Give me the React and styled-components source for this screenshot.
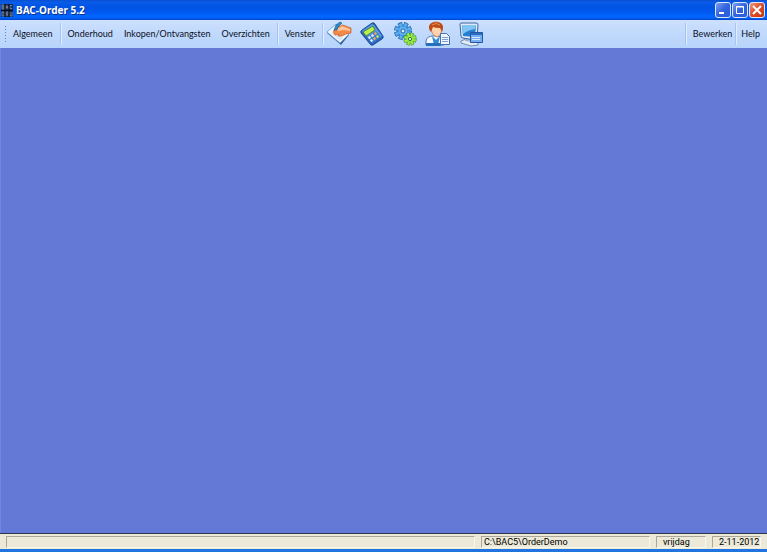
import React from 'react';
import styled, { createGlobalStyle } from 'styled-components';

const GlobalStyle = createGlobalStyle`
    * {
        box-sizing: border-box;
    }

    body {
        margin: 0;
    }
`

const Window = styled.div`
    display: flex;
    flex-direction: column;
    min-height: 100vh;
    border-bottom: 3px solid #1f74e0;
    font-family: Lato, sans-serif;
    background: #6479d6;
`

const TitleBar = styled.header`
    display: flex;
    align-items: center;
    height: 20px;
    padding: 0 2px 0 1px;
    background: linear-gradient(#0a50d0 0, #0a5be8 2px, #0054e4 7px, #0058ee 12px, #0066ff 16px, #0062f8 18px, #0042c8 20px);
`

const Title = styled.h1`
    flex: 1;
    margin: 0 0 0 3px;
    font-family: "Noto Sans", sans-serif;
    font-size: 10px;
    font-weight: 700;
    line-height: 20px;
    color: #fff;
    text-shadow: 1px 1px 0 #0a308c;
`

const WindowButtons = styled.div`
    display: flex;
    gap: 1px;
`

const WindowButton = styled.button`
    display: flex;
    width: 16px;
    height: 16px;
    padding: 0;
    border: 1px solid #dce6fb;
    border-radius: 3px;
    background: ${({ $close }) => $close
      ? 'linear-gradient(135deg, #ee9a7c, #dc4a24 50%, #c33a10)'
      : 'linear-gradient(135deg, #7d9ff2, #3263dc 50%, #2a5ce4)'};
`

const ToolBar = styled.nav`
    display: flex;
    align-items: center;
    height: 28px;
    padding: 0 7px 0 5px;
    background: linear-gradient(#cde0fe, #c0d9fc 50%, #b9d4fb);
`

const Grip = styled.span`
    width: 1px;
    height: 16px;
    margin-right: 7px;
    background: repeating-linear-gradient(#5c7fc4 0, #5c7fc4 1px, transparent 1px, transparent 3px);
`

const MenuButton = styled.button`
    padding: 0;
    margin-right: ${({ $gap }) => $gap || 0}px;
    border: 0;
    background: none;
    font-family: Lato, sans-serif;
    font-size: 9px;
    line-height: 20px;
    color: #0a0f1c;
    white-space: nowrap;
`

const Separator = styled.span`
    width: 2px;
    height: 22px;
    margin-right: ${({ $gap }) => $gap || 6}px;
    border-left: 1px solid #a9c3ef;
    border-right: 1px solid #e0ecff;
`

const Tools = styled.div`
    display: flex;
    flex: 1;
    gap: 7px;
`

const ToolButton = styled.button`
    display: flex;
    width: 26px;
    height: 26px;
    padding: 0;
    border: 0;
    background: none;
`

const Workspace = styled.main`
    flex: 1;
    border-left: 1px solid #7187db;
`

const StatusBar = styled.footer`
    display: flex;
    gap: 6px;
    height: 16px;
    padding: 2px 6px 1px;
    border-top: 1px solid #303448;
    background: #ece9d8;
`

const StatusPanel = styled.div`
    flex: ${({ $width }) => ($width ? `0 0 ${$width}px` : '1')};
    padding-left: ${({ $pad }) => $pad || 2}px;
    border: 1px solid;
    border-color: #aca899 #f8f7f0 #f8f7f0 #aca899;
    font-family: Roboto, sans-serif;
    font-size: 9px;
    line-height: 11px;
    color: #000;
    white-space: nowrap;
`

const LogoIcon = () => (
  <svg width="12" height="13" viewBox="0 0 12 13" aria-hidden="true">
    <rect width="12" height="13" fill="#16305e" />
    <path d="M1 1v4M1 1h2v2H1m0 2h2V3M5 5V2h2v3M5 3.500h2M11 1.500H9v3h2M1 8v4h2V8zM5 12V8h2v2H5m1 0 1 2M9 8v4h2V8" fill="none" stroke="#8a9099" strokeWidth=".8" />
    <path d="M0 6.500h12M4 0v13M8 0v13" stroke="#050a18" strokeWidth="1" />
  </svg>
)

const OrderIcon = () => (
  <svg width="26" height="26" viewBox="0 0 26 26" aria-hidden="true">
    <path d="m1 12 9-9 13 11-8 10z" fill="#34699f" />
    <path d="m1 11 9-8 13 10-9 9z" fill="#f3f8ff" stroke="#6d9ccb" strokeWidth=".8" />
    <path d="m5 12 3-3 9 8-3 3z" fill="#d9e7f8" />
    <path d="m8 10 4-4 5-2 5 2 3 1v5l-5 1-4 2h-4l1-2-4 1q-2-2-1-5z" fill="#f48a48" stroke="#cc5a20" strokeWidth=".7" />
    <path d="m11 8 5-3 5 2 3 1v2l-6-1-6 1z" fill="#ffc49b" />
    <path d="m8 9 2-5 4-3 2 1-4 4-1 3z" fill="#278bce" stroke="#155b98" strokeWidth=".6" />
  </svg>
)

const CalculatorIcon = () => (
  <svg width="26" height="26" viewBox="0 0 26 26" aria-hidden="true">
    <path d="M3 9 13 2q2-1 3 1l8 12q1 2-1 3l-9 6q-2 1-3-1L2 12q-1-2 1-3z" fill="#2465bd" stroke="#153f86" strokeWidth=".8" />
    <path d="m3 10 10-7 2 1 8 11-10 7z" fill="#5b9be8" />
    <path d="m4 11 10-6 2 4-9 6z" fill="#b9f04a" stroke="#3f702c" strokeWidth=".8" />
    <path d="m8 16 9-6 5 6-9 6z" fill="#3f7dcf" />
    <path d="m9 16 2-1 1 2-2 1zm3-2 2-1 1 2-2 1zm-1 5 2-1 1 2-2 1z" fill="#f2f7ff" />
    <path d="m15 12 2-1 1 2-2 1zm-1 5 2-1 1 2-2 1z" fill="#ffad3d" />
    <path d="m17 15 2-1 1 2-2 1z" fill="#c2f04e" />
  </svg>
)

const GearsIcon = () => (
  <svg width="26" height="26" viewBox="0 0 26 26" aria-hidden="true">
    <circle cx="11" cy="10" r="6.500" fill="none" stroke="#1e63ad" strokeWidth="5" strokeDasharray="3.700 1.405" />
    <circle cx="11" cy="10" r="6.800" fill="#2f83d0" />
    <circle cx="11" cy="10" r="6.500" fill="none" stroke="#5eafee" strokeWidth="3.400" strokeDasharray="2.700 2.405" strokeDashoffset="-.5" />
    <circle cx="11" cy="10" r="4.500" fill="#63b1ec" />
    <circle cx="11" cy="10" r="2" fill="#e0efff" stroke="#2065aa" />
    <circle cx="18" cy="18" r="4.600" fill="none" stroke="#27891d" strokeWidth="4" strokeDasharray="2.700 .913" />
    <circle cx="18" cy="18" r="5" fill="#58b52f" />
    <circle cx="18" cy="18" r="4.600" fill="none" stroke="#a4e94d" strokeWidth="3" strokeDasharray="2 1.613" strokeDashoffset="-.3" />
    <circle cx="18" cy="18" r="3.500" fill="#9be54b" />
    <circle cx="18" cy="18" r="1.600" fill="#e3f5ff" stroke="#27821a" />
  </svg>
)

const UserIcon = () => (
  <svg width="26" height="26" viewBox="0 0 26 26" aria-hidden="true">
    <path d="M1 24v-4q1-5 7-5h4q7 1 7 6v3z" fill="#f3f7ff" stroke="#4b78b5" />
    <path d="m7 15 4 4 4-4-2 9H9z" fill="#3188d4" />
    <path d="M1 22h15v3H1z" fill="#286fbb" />
    <path d="M6 6q0-5 5-5t6 5q0 8-5 10-6-2-6-10z" fill="#ffd3ac" stroke="#b36a39" strokeWidth=".7" />
    <path d="M4 8Q3 1 11 1q8 0 7 7l-1 3-2-4q-5 0-7-1l-2 5z" fill="#bd4c1d" />
    <path d="M7 4q4-3 8 0" fill="none" stroke="#ea8c48" />
    <path d="M15.500 12.500h6l3 3v8h-9z" fill="#edf5ff" stroke="#496faf" />
    <path d="M17 16.500h6m-6 2h6m-6 2h6" stroke="#7f9fd4" />
  </svg>
)

const ComputerIcon = () => (
  <svg width="26" height="26" viewBox="0 0 26 26" aria-hidden="true">
    <path d="m3 20 5-2 12 3v3l-7 1-10-3z" fill="#e4ebf3" stroke="#5679a8" strokeWidth=".8" />
    <path d="m7 17 8 1v3l-8-1z" fill="#9eb3cf" />
    <path d="M2 3q0-1 2-1h14q2 0 2 2l-1 13q0 2-2 2L5 17q-2 0-2-2z" fill="#e1eaf5" stroke="#37669f" />
    <path d="M4 4h14l-1 12-12-1z" fill="#2481d2" />
    <path d="M4 4h14l-1 4q-7 1-12 5z" fill="#82c4f3" />
    <path d="M12.500 11.500h12v10h-12z" fill="#76aef0" stroke="#2556a0" />
    <path d="M13 12h11v2H13z" fill="#2870c6" />
    <path d="M14 16.500h8m-8 2h8" stroke="#d9eaff" />
  </svg>
)

const App = () => {

  return (
    <Window>
        <GlobalStyle />
        <TitleBar>
            <LogoIcon />
            <Title>BAC-Order 5.2</Title>
            <WindowButtons>
                <WindowButton aria-label="Minimaliseren">
                    <svg width="14" height="14" viewBox="0 0 14 14"><path d="M3 10h5" stroke="#fff" strokeWidth="2" /></svg>
                </WindowButton>
                <WindowButton aria-label="Maximaliseren">
                    <svg width="14" height="14" viewBox="0 0 14 14"><path d="M3.500 3.500h7v7h-7zM3 4h8" fill="none" stroke="#fff" /></svg>
                </WindowButton>
                <WindowButton $close aria-label="Sluiten">
                    <svg width="14" height="14" viewBox="0 0 14 14"><path d="m3 3 8 8m0-8-8 8" stroke="#fff" strokeWidth="2" /></svg>
                </WindowButton>
            </WindowButtons>
        </TitleBar>
        <ToolBar>
            <Grip />
            <MenuButton $gap={7}>Algemeen</MenuButton>
            <Separator />
            <MenuButton $gap={11}>Onderhoud</MenuButton>
            <MenuButton $gap={11}>Inkopen/Ontvangsten</MenuButton>
            <MenuButton $gap={7}>Overzichten</MenuButton>
            <Separator />
            <MenuButton $gap={7}>Venster</MenuButton>
            <Separator $gap={2} />
            <Tools>
                <ToolButton aria-label="Orders"><OrderIcon /></ToolButton>
                <ToolButton aria-label="Rekenmachine"><CalculatorIcon /></ToolButton>
                <ToolButton aria-label="Instellingen"><GearsIcon /></ToolButton>
                <ToolButton aria-label="Gebruiker"><UserIcon /></ToolButton>
                <ToolButton aria-label="Systeem"><ComputerIcon /></ToolButton>
            </Tools>
            <Separator />
            <MenuButton $gap={3}>Bewerken</MenuButton>
            <Separator $gap={4} />
            <MenuButton>Help</MenuButton>
        </ToolBar>
        <Workspace />
        <StatusBar>
            <StatusPanel />
            <StatusPanel $width={169}>C:\BAC5\OrderDemo</StatusPanel>
            <StatusPanel $width={50} $pad={6}>vrijdag</StatusPanel>
            <StatusPanel $width={49} $pad={6}>2-11-2012</StatusPanel>
        </StatusBar>
    </Window>
  );
};

export default App;
